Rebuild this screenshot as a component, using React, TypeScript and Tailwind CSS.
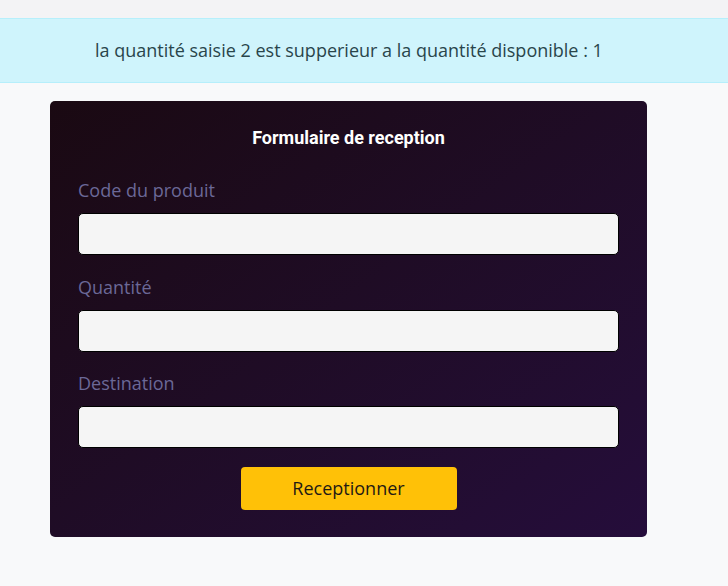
export default function App() {
  const fields = ['Code du produit', 'Quantité', 'Destination']

  return (
    <div className="min-h-[586px] bg-[#f8f9fa] font-['Open_Sans',sans-serif]">
      <div className="h-[18px] bg-[#f3f3f5]" />
      <div className="flex h-[65px] items-center border-y border-[#b6effb] bg-[#cff4fc] pl-[95px] text-[18px] text-[#29454b]">
        la quantité saisie 2 est supperieur a la quantité disponible : 1
      </div>
      <div className="pl-[50px] pt-[18px]">
        <form className="w-[597px] rounded-[5px] bg-gradient-to-br from-[#1a0912] to-[#250d3b] px-[28px] pb-[27px] pt-[25px]">
          <h2 className="mb-[28px] text-center font-['Roboto',sans-serif] text-[18px] font-bold leading-[24px] text-white">
            Formulaire de reception
          </h2>
          {fields.map((f, i) => (
            <div key={f} className={i === 2 ? 'mb-[18.5px]' : 'mb-[19.5px]'}>
              <label className="mb-[11px] block text-[18px] leading-[24px] text-[#6b6897]">{f}</label>
              <input
                type="text"
                className="block h-[42px] w-full rounded-[5px] border border-black bg-[#f5f5f5] px-3 outline-none"
              />
            </div>
          ))}
          <button
            type="button"
            className="mx-auto block h-[43px] w-[216px] rounded-[4px] bg-[#ffc107] text-[18px] text-[#1f1a14]"
          >
            Receptionner
          </button>
        </form>
      </div>
    </div>
  )
}
